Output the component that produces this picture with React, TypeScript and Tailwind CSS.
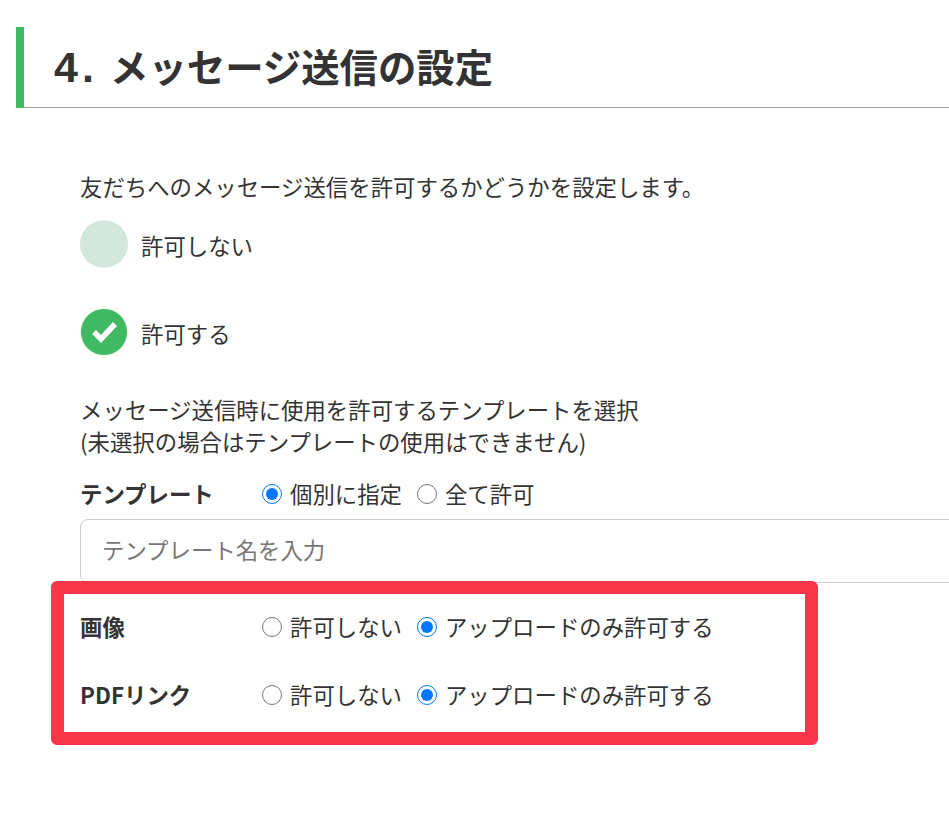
function Radio({ checked, label, name }: { checked?: boolean; label: string; name: string }) {
  return (
    <label className="flex items-center">
      <input
        type="radio"
        name={name}
        defaultChecked={checked}
        className="w-[20px] h-[20px] m-0 shrink-0 accent-[#0075ff]"
      />
      <span className="ml-[8px] leading-[30px] pb-[2px]">{label}</span>
    </label>
  )
}

function RadioRow({ title, name, options, className }: { title: string; name: string; options: [string, boolean][]; className: string }) {
  return (
    <div className={`flex items-center ${className}`}>
      <div className="w-[182px] shrink-0 font-bold leading-[30px] pb-[2px]">{title}</div>
      <div className="flex items-center gap-[15px]">
        {options.map(([label, checked]) => (
          <Radio key={label} name={name} label={label} checked={checked} />
        ))}
      </div>
    </div>
  )
}

function CircleCheck({ checked, label, className }: { checked?: boolean; label: string; className: string }) {
  return (
    <div className={`flex items-center ${className}`}>
      {checked ? (
        <span className="w-[48px] h-[48px] flex items-center justify-center shrink-0">
          <span className="w-[46px] h-[46px] rounded-full bg-[#41b964] shadow-[0_0_2px_#a8dcb8] flex items-center justify-center">
            <svg width="46" height="46" viewBox="0 0 46 46" fill="none">
              <path d="M13 23 L20 30 L34 15" stroke="#fff" strokeWidth="5.5" />
            </svg>
          </span>
        </span>
      ) : (
        <span className="w-[48px] h-[48px] rounded-full bg-[#d3e7dc] shrink-0" />
      )}
      <span className="ml-[13px] pt-[2px]">{label}</span>
    </div>
  )
}

export default function App() {
  return (
    <div className="relative w-[949px] h-[814px] overflow-hidden bg-white text-[#333] text-[22.4px] leading-[32px] font-['Noto_Sans_CJK_JP','Noto_Sans',sans-serif]">
      <div className="pt-[27px] pl-[16px]">
        <div className="flex h-[81px]">
          <div className="w-[8px] bg-[#41b964]" />
          <h2 className="flex-1 flex items-baseline border-b border-[#aaa] pl-[30px] text-[38.4px] leading-[77px] font-bold">
            <span className="w-[56px] text-[43px] tracking-[4px] font-['Liberation_Sans',sans-serif]">4.</span>
            <span>メッセージ送信の設定</span>
          </h2>
        </div>
      </div>

      <div className="pl-[80px] pt-[62px]">
        <p>友だちへのメッセージ送信を許可するかどうかを設定します。</p>
        <CircleCheck label="許可しない" className="mt-[18px]" />
        <CircleCheck label="許可する" checked className="mt-[40px]" />
        <p className="mt-[37px]">メッセージ送信時に使用を許可するテンプレートを選択</p>
        <p>(未選択の場合はテンプレートの使用はできません)</p>
        <RadioRow
          title="テンプレート"
          name="template"
          className="mt-[21px]"
          options={[
            ['個別に指定', true],
            ['全て許可', false],
          ]}
        />
        <input
          placeholder="テンプレート名を入力"
          className="block mt-[9px] w-[900px] h-[64px] pl-[21px] pb-[5px] border border-[#ccc] rounded-[8px] placeholder:text-[#777] outline-none"
        />
        <RadioRow
          title="画像"
          name="image"
          className="mt-[28px]"
          options={[
            ['許可しない', false],
            ['アップロードのみ許可する', true],
          ]}
        />
        <RadioRow
          title="PDFリンク"
          name="pdf"
          className="mt-[36px]"
          options={[
            ['許可しない', false],
            ['アップロードのみ許可する', true],
          ]}
        />
      </div>

      {/* red annotation drawn over the screenshot */}
      <div className="absolute left-[51px] top-[581px] w-[767px] h-[164px] border-[13px] border-[#f93549] rounded-[6px]" />
    </div>
  )
}
